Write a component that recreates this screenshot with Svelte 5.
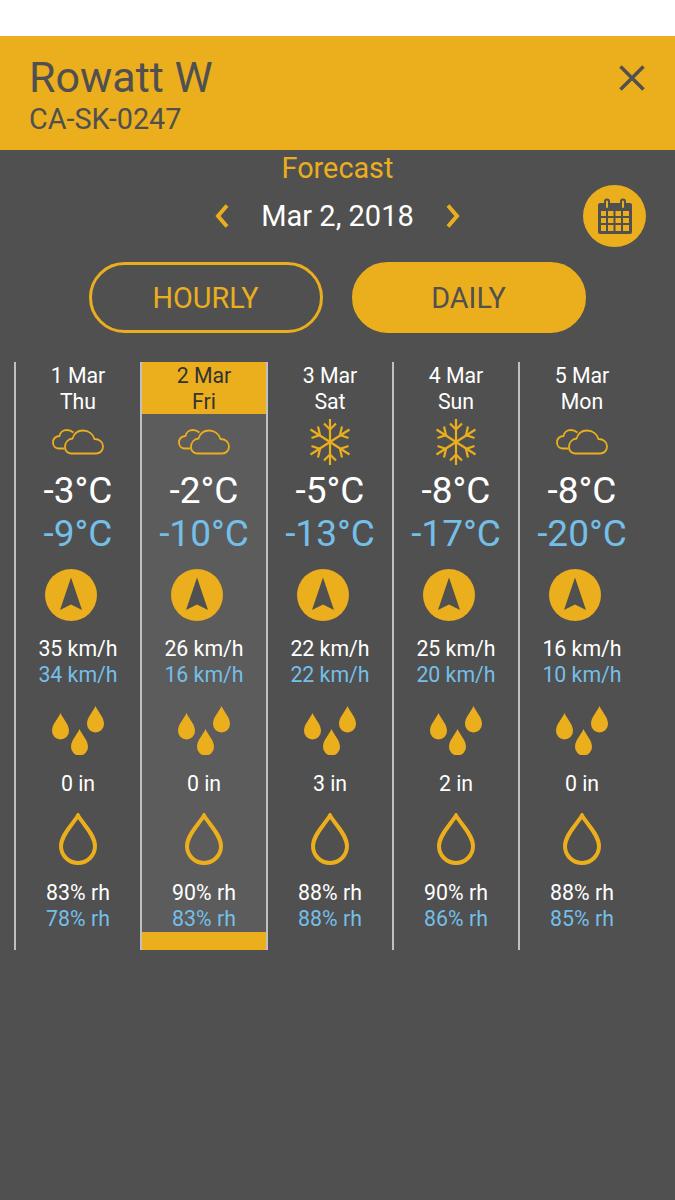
<script>
  const days = [
    { date: '1 Mar', day: 'Thu', icon: 'cloud', hi: '-3°C', lo: '-9°C', w1: '35 km/h', w2: '34 km/h', rain: '0 in', h1: '83% rh', h2: '78% rh' },
    { date: '2 Mar', day: 'Fri', icon: 'cloud', hi: '-2°C', lo: '-10°C', w1: '26 km/h', w2: '16 km/h', rain: '0 in', h1: '90% rh', h2: '83% rh', sel: true },
    { date: '3 Mar', day: 'Sat', icon: 'snow', hi: '-5°C', lo: '-13°C', w1: '22 km/h', w2: '22 km/h', rain: '3 in', h1: '88% rh', h2: '88% rh' },
    { date: '4 Mar', day: 'Sun', icon: 'snow', hi: '-8°C', lo: '-17°C', w1: '25 km/h', w2: '20 km/h', rain: '2 in', h1: '90% rh', h2: '86% rh' },
    { date: '5 Mar', day: 'Mon', icon: 'cloud', hi: '-8°C', lo: '-20°C', w1: '16 km/h', w2: '10 km/h', rain: '0 in', h1: '88% rh', h2: '85% rh', last: true }
  ];
  const dropPath = 'M8.5 0C11 6 17 11 17 18A8.5 8.5 0 0 1 0 18C0 11 6 6 8.5 0Z';
</script>

<div class="page">
  <div class="topbar"></div>
  <header class="header">
    <div class="titles">
      <div class="name">Rowatt W</div>
      <div class="code">CA-SK-0247</div>
    </div>
    <svg class="close" viewBox="0 0 26 26" width="26" height="26"><path d="M1.5 1.5L24.5 24.5M24.5 1.5L1.5 24.5" /></svg>
  </header>

  <div class="forecast">Forecast</div>
  <div class="daterow">
    <div></div>
    <div class="datenav">
      <svg class="chev" viewBox="0 0 14 24" width="14" height="24"><path d="M12 1.5L3 12L12 22.5" /></svg>
      <span class="date">Mar 2, 2018</span>
      <svg class="chev" viewBox="0 0 14 24" width="14" height="24"><path d="M2 1.5L11 12L2 22.5" /></svg>
    </div>
    <div class="calwrap">
      <div class="calbtn">
        <svg viewBox="0 0 34 36" width="34" height="36">
          <path class="calbody" fill-rule="evenodd" d="M2 5H6V3.5A3 3 0 0 1 12 3.5V5H22V3.5A3 3 0 0 1 28 3.5V5H32A2 2 0 0 1 34 7V34A2 2 0 0 1 32 36H2A2 2 0 0 1 0 34V7A2 2 0 0 1 2 5ZM8 3.5V9A1 1 0 0 0 10 9V3.5A1 1 0 0 0 8 3.5ZM24 3.5V9A1 1 0 0 0 26 9V3.5A1 1 0 0 0 24 3.5ZM3 13V18H8V13ZM10 13V18H15.500V13ZM17.500 13V18H23V13ZM25 13V18H31V13ZM3 20V25H8V20ZM10 20V25H15.500V20ZM17.500 20V25H23V20ZM25 20V25H31V20ZM3 27V33H8V27ZM10 27V33H15.500V27ZM17.500 27V33H23V27ZM25 27V33H31V27Z" />
        </svg>
      </div>
    </div>
  </div>

  <div class="toggle">
    <div class="tbtn outline">HOURLY</div>
    <div class="tbtn solid">DAILY</div>
  </div>

  <div class="columns">
    {#each days as d}
      <div class="col" class:sel={d.sel} class:last={d.last}>
        <div class="head">
          <div>{d.date}</div>
          <div>{d.day}</div>
        </div>
        <div class="wx">
          {#if d.icon === 'cloud'}
            <svg viewBox="0 0 52 26" width="52" height="26" class="line thin">
              <path d="M19 24.500C15 24.500 13 21 13 18C13 13.500 16 10 20.500 9.500C22 4.500 26 1.500 31 1.500C36.500 1.500 41 5 42.500 10C47.500 10 51 13 51 17.500C51 21.500 48 24.500 44 24.500Z" />
              <path d="M21.500 3.500C19.500 2 17.500 1 15 1C11 1 8 3.500 7.500 7C3.500 7.500 1 10 1 13.500C1 17 3.500 19.500 7 19.500H12.500" />
            </svg>
          {:else}
            <svg viewBox="0 0 42 48" width="42" height="48" class="line snow">
              <path d="M21 1V47M1.500 11.500L40.500 36.500M40.500 11.500L1.500 36.500" />
              <path d="M15 5.500L21 11.500L27 5.500M15 42.500L21 36.500L27 42.500" />
              <path d="M2.500 20L11 17L9 8.500M39.500 20L31 17L33 8.500M2.500 28L11 31L9 39.500M39.500 28L31 31L33 39.500" />
            </svg>
          {/if}
        </div>
        <div class="temp hi">{d.hi}</div>
        <div class="temp lo">{d.lo}</div>
        <div class="wind">
          <svg viewBox="0 0 52 52" width="52" height="52">
            <circle cx="26" cy="26" r="26" class="fillY" />
            <path d="M26 8.500L37 41L26 35.500L15 41Z" class="fillG" />
          </svg>
        </div>
        <div class="small first">{d.w1}</div>
        <div class="small blue">{d.w2}</div>
        <div class="drops">
          <svg viewBox="0 0 52 49" width="52" height="49">
            <g class="fillY">
              <path d={dropPath} transform="translate(0 7)" />
              <path d={dropPath} transform="translate(35 0)" />
              <path d={dropPath} transform="translate(19 23)" />
            </g>
          </svg>
        </div>
        <div class="small rain">{d.rain}</div>
        <div class="hum">
          <svg viewBox="0 0 38 52" width="38" height="52" class="line thick">
            <path d="M19 2.500C24 11 36 22 36 33A17 17 0 0 1 2 33C2 22 14 11 19 2.500Z" />
          </svg>
        </div>
        <div class="small first2">{d.h1}</div>
        <div class="small blue">{d.h2}</div>
        {#if d.sel}<div class="foot"></div>{/if}
      </div>
    {/each}
  </div>
</div>

<style>
  :global(body) { margin: 0; background: #505050; }
  .page {
    width: 675px;
    height: 1200px;
    overflow: hidden;
    background: #505050;
    font-family: Roboto, "Liberation Sans", sans-serif;
    color: #fff;
  }
  .topbar { height: 36px; background: #fff; }
  .header {
    height: 114px;
    box-sizing: border-box;
    background: #ebae1d;
    color: #505050;
    display: flex;
    justify-content: space-between;
    padding: 18px 30px 0 29px;
  }
  .name { font-size: 43px; line-height: 46px; }
  .code { font-size: 28.800px; line-height: 34px; margin-top: 2px; }
  .close { margin-top: 11px; }
  .close path { fill: none; stroke: #505050; stroke-width: 3.5; }

  .forecast { text-align: center; color: #ebae1d; font-size: 28.800px; line-height: 34px; padding-top: 1px; }
  .daterow {
    display: grid;
    grid-template-columns: 1fr auto 1fr;
    align-items: center;
    height: 63px;
    margin-top: -1px;
  }
  .datenav { display: flex; align-items: center; gap: 32px; }
  .date { font-size: 29px; line-height: 34px; }
  .chev path { fill: none; stroke: #ebae1d; stroke-width: 4; }
  .calwrap { display: flex; justify-content: flex-end; padding-right: 29px; }
  .calbtn {
    width: 63px;
    height: 62px;
    border-radius: 50%;
    background: #ebae1d;
    display: flex;
    align-items: center;
    justify-content: center;
  }
  .calbody { fill: #505050; }

  .toggle { display: flex; justify-content: center; gap: 29px; margin-top: 15px; margin-left: -1px; }
  .tbtn {
    width: 234px;
    height: 71px;
    box-sizing: border-box;
    border-radius: 36px;
    border: 3.500px solid #ebae1d;
    display: flex;
    align-items: center;
    justify-content: center;
    font-size: 28.800px;
  }
  .outline { color: #ebae1d; }
  .solid { background: #ebae1d; color: #505050; }

  .columns { display: flex; margin: 29px 0 0 14px; }
  .col {
    width: 126px;
    height: 588px;
    box-sizing: border-box;
    border-left: 2px solid #c0c0c0;
    display: flex;
    flex-direction: column;
    align-items: center;
    position: relative;
  }
  .col.sel { background: #5c5c5c; border-right: 2px solid #c0c0c0; margin-right: -2px; width: 128px; z-index: 1; }
  .head {
    align-self: stretch;
    height: 52px;
    padding-top: 1px;
    box-sizing: border-box;
    text-align: center;
    font-size: 21.300px;
    line-height: 26px;
  }
  .sel .head { background: #ebae1d; color: #333; }
  .wx { height: 52px; display: flex; align-items: center; justify-content: center; margin-top: 2px; }
  .line { fill: none; stroke: #ebae1d; }
  .thin { stroke-width: 1.800; }
  .snow { stroke-width: 2.200; }
  .thick { stroke-width: 4; }
  .temp { font-size: 37px; line-height: 43px; }
  .hi { margin-top: 1px; }
  .lo { color: #74bfe8; }
  .wind { margin-top: 14px; height: 52px; align-self: center; margin-right: 14px; }
  .wind svg, .drops svg, .hum svg, .wx svg { display: block; }
  .fillY { fill: #ebae1d; }
  .fillG { fill: #505050; }
  .small { font-size: 21.300px; line-height: 26px; }
  .first { margin-top: 15px; }
  .blue { color: #74bfe8; }
  .drops { margin-top: 18px; height: 49px; }
  .rain { margin-top: 16px; }
  .hum { margin-top: 16px; height: 52px; }
  .first2 { margin-top: 15px; }
  .foot {
    position: absolute;
    left: 0;
    right: 0;
    bottom: 0;
    height: 18px;
    background: #ebae1d;
  }
</style>
